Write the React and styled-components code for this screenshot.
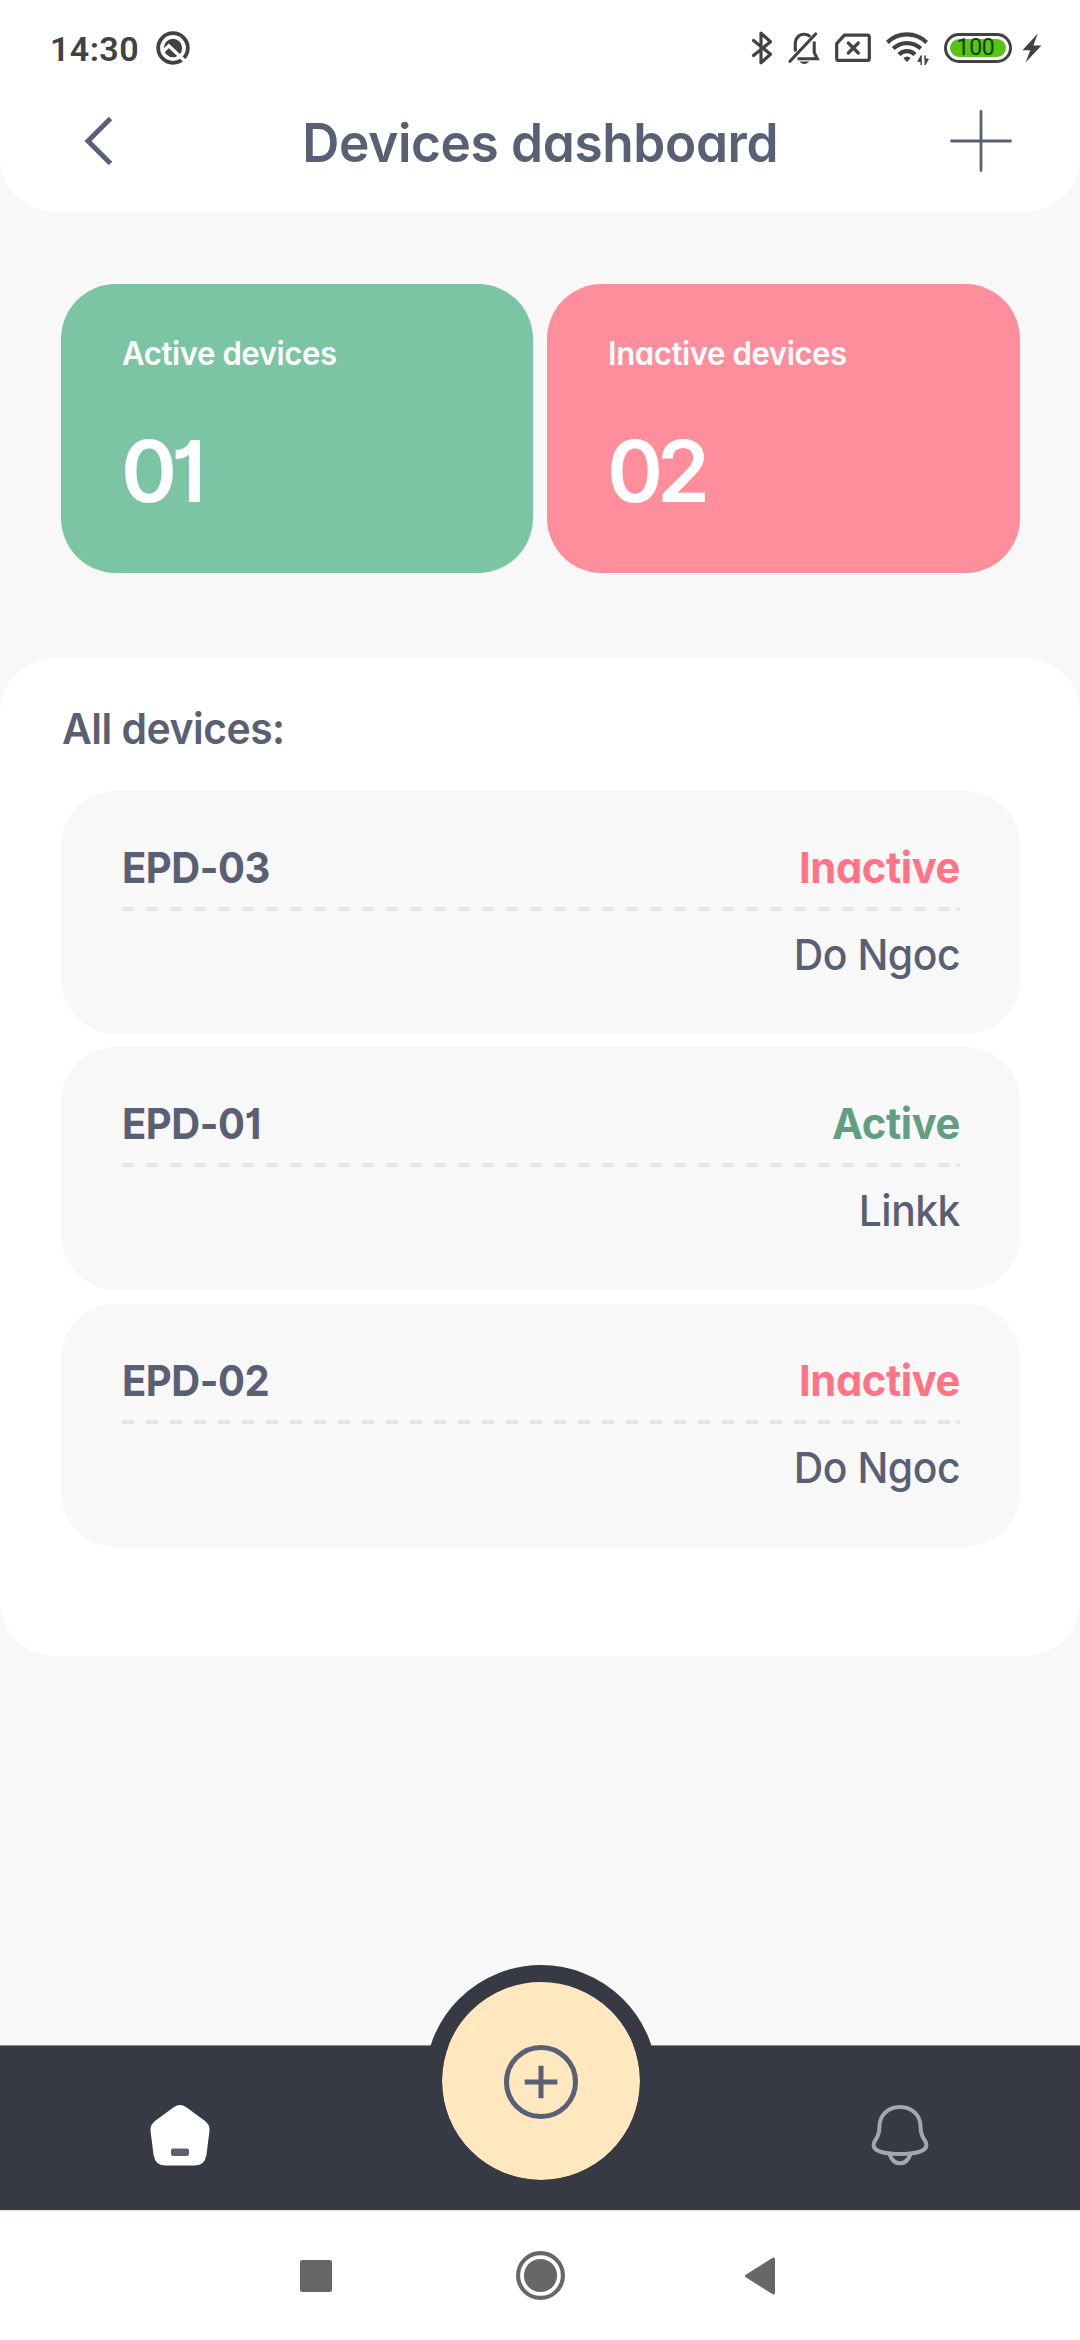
import React from "react";
import styled, { createGlobalStyle } from "styled-components";

const GlobalStyle = createGlobalStyle`
  * { box-sizing: border-box; }
  body {
    margin: 0;
    background: #f8f8f8;
    font-family: Inter, "Noto Sans", sans-serif;
    font-feature-settings: "cv11", "cv01";
    color: #5a6074;
  }
  svg { display: block; flex: none; }
`;

const Screen = styled.div`
  width: 1080px;
  height: 2340px;
  display: flex;
  flex-direction: column;
  overflow: hidden;
  background: #f8f8f8;
`;

const Header = styled.header`
  height: 212px;
  flex: none;
  background: #fff;
  border-radius: 0 0 55px 55px;
`;

const StatusBar = styled.div`
  height: 96px;
  display: flex;
  align-items: center;
  justify-content: space-between;
  padding: 0 38px 0 50px;
  color: #424242;
`;

const StatusGroup = styled.div`
  display: flex;
  align-items: center;
  gap: ${(p) => p.$gap}px;
`;

const Clock = styled.span`
  font: 600 34px/40px Roboto, sans-serif;
  letter-spacing: 0.4px;
  padding-top: 2px;
`;

const Battery = styled.div`
  width: 68px;
  height: 30px;
  margin-right: -5px;
  border: 3px solid #424242;
  border-radius: 15px;
  padding: 3px;
  display: flex;
`;

const BatteryLevel = styled.div`
  flex: 1;
  display: flex;
  align-items: center;
  justify-content: center;
  border-radius: 9px;
  background: #57c511;
  color: #15400a;
  font: 400 23px/18px Roboto, sans-serif;
  letter-spacing: -0.3px;
  padding-right: 5px;
`;

const TitleBar = styled.div`
  height: 90px;
  display: grid;
  grid-template-columns: 1fr auto 1fr;
  align-items: center;
  padding: 0 68px 0 84px;
`;

const IconButton = styled.button`
  appearance: none;
  border: 0;
  background: none;
  padding: 0;
  color: inherit;
  justify-self: ${(p) => p.$side};
`;

const Title = styled.h1`
  margin: 0;
  padding-top: 3px;
  transform: translateX(-8px) scaleX(0.97);
  font-size: 53px;
  line-height: 60px;
  font-weight: 600;
  letter-spacing: -0.4px;
  white-space: nowrap;
`;

const Stats = styled.section`
  flex: none;
  display: grid;
  grid-template-columns: 472px 473px;
  gap: 14px;
  padding: 72px 60px 0 61px;
`;

const StatCard = styled.div`
  height: 289px;
  padding: 50px 61px 0;
  border-radius: 55px;
  background: ${(p) => p.$color};
  color: #fff;
`;

const StatLabel = styled.div`
  font-size: 32px;
  line-height: 40px;
  font-weight: 600;
  letter-spacing: -0.4px;
  transform: scaleX(0.97);
  transform-origin: left;
`;

const StatValue = styled.div`
  margin-top: 53px;
  margin-left: -1px;
  font-size: 85px;
  line-height: 90px;
  font-weight: 600;
  letter-spacing: -6px;
`;

const Panel = styled.section`
  flex: none;
  height: 998px;
  margin-top: 85px;
  padding: 45px 60px 0 61px;
  border-radius: 55px;
  background: #fff;
`;

const PanelTitle = styled.h2`
  margin: 0 0 38px 1px;
  font-size: 43px;
  line-height: 50px;
  font-weight: 600;
  letter-spacing: -0.5px;
  transform: scaleX(0.95);
  transform-origin: left;
`;

const DeviceList = styled.div`
  display: flex;
  flex-direction: column;
  gap: 13.4px;
`;

const DeviceCard = styled.article`
  height: 243px;
  padding: 51px 60px 0 61px;
  border-radius: 55px;
  background: #f8f8f8;
`;

const DeviceHead = styled.div`
  display: flex;
  justify-content: space-between;
  font-size: 43px;
  line-height: 50px;
  font-weight: 700;
`;

const DeviceName = styled.span`
  letter-spacing: -0.5px;
  transform: scaleX(0.93);
  transform-origin: left;
`;

const DeviceStatus = styled.span`
  color: ${(p) => (p.$active ? "#629f82" : "#ff7385")};
  letter-spacing: -0.4px;
  transform: scaleX(0.97);
  transform-origin: right;
`;

const Divider = styled.div`
  height: 4px;
  margin-top: 15px;
  background:
    linear-gradient(#e5e6ea, #e5e6ea) right / 4px 4px no-repeat,
    linear-gradient(90deg, #e5e6ea 12px, transparent 12px) left / 24px 4px repeat-x;
`;

const Owner = styled.div`
  margin-top: 18px;
  text-align: right;
  font-size: 43px;
  line-height: 50px;
  font-weight: 500;
  letter-spacing: -0.5px;
  transform: scaleX(0.95);
  transform-origin: right;
`;

const TabBar = styled.nav`
  flex: none;
  height: 166px;
  margin-top: auto;
  display: grid;
  grid-template-columns: repeat(3, 360px);
  justify-items: center;
  align-items: center;
  background: #373a45;
  border-top: 1px solid #8b8d93;
  border-bottom: 1px solid #d9dadc;
`;

const TabItem = styled.div`
  padding-top: 14px;
`;

const AddButton = styled.button`
  appearance: none;
  width: 232px;
  height: 232px;
  margin: -127px 0 -33px 1px;
  padding: 0;
  display: flex;
  align-items: center;
  justify-content: center;
  border: 17px solid #373a45;
  border-radius: 50%;
  background: #ffe8c0;
  background-clip: padding-box;
  color: #5a6074;
`;

const SystemNav = styled.div`
  flex: none;
  height: 129px;
  display: flex;
  justify-content: center;
  align-items: center;
  padding-right: 4px;
  background: #fff;
  color: #676767;
`;

const HomeKey = styled.div`
  margin: 0 180px 0 184px;
`;

function AssistIcon() {
  return (
    <svg width="34" height="34" viewBox="0 0 34 34" fill="none">
      <circle cx="17" cy="17" r="14.8" stroke="currentColor" strokeWidth="3.8" />
      <circle cx="17" cy="17" r="9.2" fill="currentColor" />
      <path d="M7 20.5 L12.8 14.8 L32 33" stroke="#fff" strokeWidth="3.4" />
    </svg>
  );
}

function BluetoothIcon() {
  return (
    <svg width="22" height="34" viewBox="0 0 22 34" fill="none" stroke="currentColor" strokeWidth="3.2" strokeLinecap="round" strokeLinejoin="round">
      <path d="M2.5 9.5 L19.5 23.3 L10 31.8 V2.2 L19.5 10.7 L2.5 24.5" />
    </svg>
  );
}

function MutedBellIcon() {
  return (
    <svg width="32" height="34" viewBox="0 0 32 34" fill="none" stroke="currentColor" strokeWidth="3.1">
      <path d="M2 30.3 L27.6 3" strokeLinecap="round" />
      <path d="M7.3 20.5 V13 C7.3 6.8 11 3.3 16 3.3 C18.6 3.3 20.8 4.2 22.3 5.8" />
      <path d="M26.2 10.5 V21.5 L29.3 27.8 H9.5" />
      <path d="M11.6 30.6 H21.2 C20 32.3 18.4 33 16.4 33 C14.4 33 12.8 32.3 11.6 30.6 Z" fill="currentColor" stroke="none" />
    </svg>
  );
}

function NoSimIcon() {
  return (
    <svg width="36" height="30" viewBox="0 0 36 30" fill="none" stroke="currentColor" strokeWidth="3.2" strokeLinejoin="round">
      <path d="M9.4 2.2 H32.4 Q34.3 2.2 34.3 4.2 V25.4 Q34.3 27.4 32.4 27.4 H3.6 Q1.7 27.4 1.7 25.4 V10.6 Z" />
      <path d="M13.3 10 L23.3 20 M23.3 10 L13.3 20" strokeLinecap="round" />
    </svg>
  );
}

function WifiIcon() {
  return (
    <svg width="43" height="34" viewBox="0 0 43 34" fill="none" stroke="currentColor">
      <path d="M1.4 11.4 C12.5 0.8 29.5 0.8 40.6 11.4" strokeWidth="4.2" />
      <path d="M7.2 17.6 C15 10.2 27 10.2 34.8 17.6" strokeWidth="4.2" />
      <path d="M13 23.6 C17.6 19 24.4 19 29 23.6" strokeWidth="4.2" />
      <path d="M17.3 27 Q21 24 24.7 27 L21 31 Z" fill="currentColor" stroke="none" />
      <path d="M35.2 34 V24.5 L31.8 30.4 H35.2 Z M39 34 V24.5 V28 H42.4 L39 34 Z" fill="currentColor" strokeWidth="1" />
    </svg>
  );
}

function BoltIcon() {
  return (
    <svg width="20" height="30" viewBox="0 0 20 30" fill="currentColor">
      <path d="M15.8 0.5 L0.4 17.2 H8.2 L3.6 29.6 L19.4 12.6 H11.4 Z" />
    </svg>
  );
}

function BackIcon() {
  return (
    <svg width="29" height="50" viewBox="0 0 29 50" fill="none" stroke="currentColor" strokeWidth="5">
      <path d="M26.5 2.5 L4 25 L26.5 47.5" />
    </svg>
  );
}

function PlusIcon() {
  return (
    <svg width="62" height="62" viewBox="0 0 62 62" fill="none" stroke="currentColor" strokeWidth="2.8" strokeLinecap="round">
      <path d="M31 1.5 V60.5 M1.5 31 H60.5" />
    </svg>
  );
}

function AddCircleIcon() {
  return (
    <svg width="76" height="76" viewBox="0 0 76 76" fill="none" stroke="currentColor" strokeWidth="5">
      <circle cx="38" cy="39" r="34.5" />
      <path d="M38 22.7 V55.3 M21.7 39 H54.3" />
    </svg>
  );
}

function HomeIcon() {
  return (
    <svg width="62" height="64" viewBox="0 0 62 64">
      <path d="M25 4 Q31 0 37 4 L56 18 Q61 22 60.5 28 L57.4 52 Q55.6 62.5 46 62.5 H16 Q6.4 62.5 4.6 52 L1.5 28 Q1 22 6 18 Z" fill="#fff" />
      <rect x="22" y="45.5" width="18" height="7.6" rx="2" fill="#5d606b" />
    </svg>
  );
}

function BellIcon() {
  return (
    <svg width="60" height="64" viewBox="0 0 60 64" fill="none" stroke="#a6a7ab" strokeWidth="4">
      <path d="M30 4 C18 4 9.4 12.4 9.4 24 C9.4 36 3.6 36.5 3.6 42 C3.6 49 18 51 30 51 C42 51 56.4 49 56.4 42 C56.4 36.5 50.6 36 50.6 24 C50.6 12.4 42 4 30 4 Z" />
      <path d="M19.5 51 C21.5 57 25 60.3 30 60.3 C35 60.3 38.5 57 40.5 51" />
    </svg>
  );
}

function RecentsIcon() {
  return (
    <svg width="32" height="32" viewBox="0 0 32 32">
      <rect width="32" height="32" rx="2" fill="currentColor" />
    </svg>
  );
}

function SystemHomeIcon() {
  return (
    <svg width="49" height="49" viewBox="0 0 49 49">
      <circle cx="24.5" cy="24.5" r="22.4" fill="none" stroke="currentColor" strokeWidth="4.1" />
      <circle cx="24.5" cy="24.5" r="16.6" fill="currentColor" />
    </svg>
  );
}

function SystemBackIcon() {
  return (
    <svg width="31" height="38" viewBox="0 0 31 38">
      <path d="M28.5 2 L1.5 19 L28.5 36 Z" fill="currentColor" stroke="currentColor" strokeWidth="3" strokeLinejoin="round" />
    </svg>
  );
}

const stats = [
  { label: "Active devices", value: "01", color: "#7bc5a4" },
  { label: "Inactive devices", value: "02", color: "#ff8e9c" },
];

const devices = [
  { name: "EPD-03", active: false, owner: "Do Ngoc" },
  { name: "EPD-01", active: true, owner: "Linkk" },
  { name: "EPD-02", active: false, owner: "Do Ngoc" },
];

export default function App() {
  return (
    <Screen>
      <GlobalStyle />
      <Header>
        <StatusBar>
          <StatusGroup $gap={17}>
            <Clock>14:30</Clock>
            <AssistIcon />
          </StatusGroup>
          <StatusGroup $gap={15}>
            <BluetoothIcon />
            <MutedBellIcon />
            <NoSimIcon />
            <WifiIcon />
            <Battery>
              <BatteryLevel>100</BatteryLevel>
            </Battery>
            <BoltIcon />
          </StatusGroup>
        </StatusBar>
        <TitleBar>
          <IconButton $side="start" aria-label="Back"><BackIcon /></IconButton>
          <Title>Devices dashboard</Title>
          <IconButton $side="end" aria-label="Add device"><PlusIcon /></IconButton>
        </TitleBar>
      </Header>

      <Stats>
        {stats.map((s) => (
          <StatCard key={s.label} $color={s.color}>
            <StatLabel>{s.label}</StatLabel>
            <StatValue>{s.value}</StatValue>
          </StatCard>
        ))}
      </Stats>

      <Panel>
        <PanelTitle>All devices:</PanelTitle>
        <DeviceList>
          {devices.map((d) => (
            <DeviceCard key={d.name}>
              <DeviceHead>
                <DeviceName>{d.name}</DeviceName>
                <DeviceStatus $active={d.active}>{d.active ? "Active" : "Inactive"}</DeviceStatus>
              </DeviceHead>
              <Divider />
              <Owner>{d.owner}</Owner>
            </DeviceCard>
          ))}
        </DeviceList>
      </Panel>

      <TabBar>
        <TabItem><HomeIcon /></TabItem>
        <AddButton aria-label="Add"><AddCircleIcon /></AddButton>
        <TabItem><BellIcon /></TabItem>
      </TabBar>
      <SystemNav>
        <RecentsIcon />
        <HomeKey><SystemHomeIcon /></HomeKey>
        <SystemBackIcon />
      </SystemNav>
    </Screen>
  );
}
